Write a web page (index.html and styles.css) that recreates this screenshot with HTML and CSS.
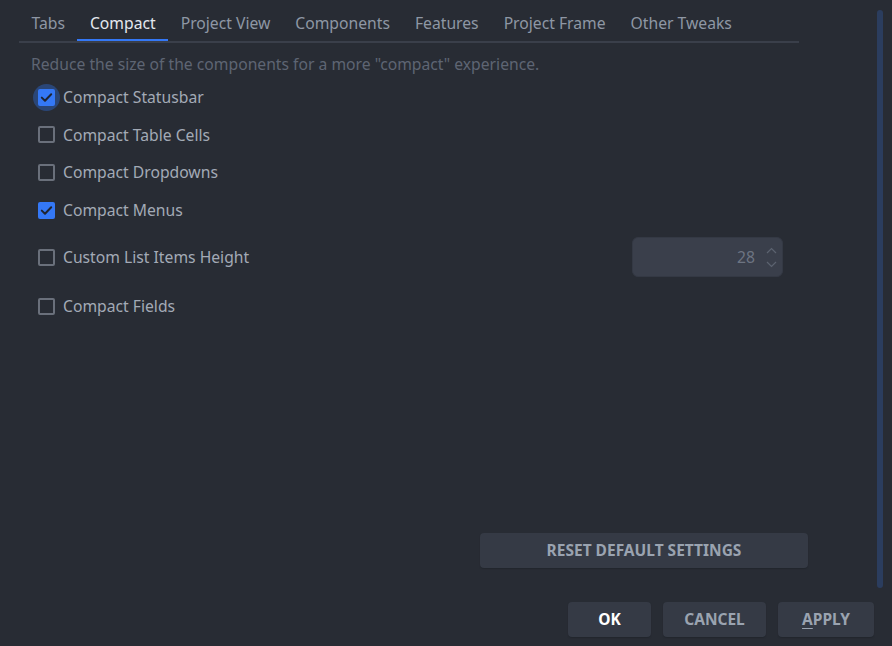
FILE: index.html
```
<!DOCTYPE html>
<html>
<head>
<meta charset="utf-8">
<link rel="stylesheet" href="styles.css">
</head>
<body>
<div class="window">
  <div class="top">
    <div class="panel">
      <div class="tabs">
        <div class="tab">Tabs</div>
        <div class="tab active">Compact</div>
        <div class="tab">Project View</div>
        <div class="tab">Components</div>
        <div class="tab">Features</div>
        <div class="tab">Project Frame</div>
        <div class="tab">Other Tweaks</div>
      </div>
      <div class="content">
        <div class="desc">Reduce the size of the components for a more "compact" experience.</div>
        <div class="row r1">
          <span class="cb checked focus"><svg viewBox="0 0 17 17" width="17" height="17"><path d="M3.8 8.6 L7 11.7 L13.2 5.3" fill="none" stroke="#1f2430" stroke-width="2" stroke-linecap="round" stroke-linejoin="round"/></svg></span>
          <span class="label">Compact Statusbar</span>
        </div>
        <div class="row r2">
          <span class="cb"></span>
          <span class="label">Compact Table Cells</span>
        </div>
        <div class="row r3">
          <span class="cb"></span>
          <span class="label">Compact Dropdowns</span>
        </div>
        <div class="row r4">
          <span class="cb checked"><svg viewBox="0 0 17 17" width="17" height="17"><path d="M3.8 8.6 L7 11.7 L13.2 5.3" fill="none" stroke="#1f2430" stroke-width="2" stroke-linecap="round" stroke-linejoin="round"/></svg></span>
          <span class="label">Compact Menus</span>
        </div>
        <div class="row r5">
          <span class="cb"></span>
          <span class="label grow">Custom List Items Height</span>
          <div class="spinner">
            <span class="num">28</span>
            <span class="arrows">
              <svg viewBox="0 0 11 7" width="11" height="7"><path d="M1 6 L5.5 1.5 L10 6" fill="none" stroke="#5c6370" stroke-width="1.2"/></svg>
              <svg viewBox="0 0 11 7" width="11" height="7"><path d="M1 1 L5.5 5.5 L10 1" fill="none" stroke="#5c6370" stroke-width="1.2"/></svg>
            </span>
          </div>
        </div>
        <div class="row r6">
          <span class="cb"></span>
          <span class="label">Compact Fields</span>
        </div>
      </div>
      <div class="reset-row">
        <button class="btn reset">RESET DEFAULT SETTINGS</button>
      </div>
    </div>
    <div class="track"><div class="thumb"></div></div>
  </div>
  <div class="actions">
    <button class="btn ok">OK</button>
    <button class="btn cancel">CANCEL</button>
    <button class="btn apply"><u>A</u>PPLY</button>
  </div>
</div>
</body>
</html>
```

FILE: styles.css
```
* { box-sizing: border-box; }
html, body {
  margin: 0;
  padding: 0;
  background: #282c34;
}
body {
  font-family: "Noto Sans", "Open Sans", sans-serif;
  font-size: 15.7px;
  color: #9aa2ae;
}
.window {
  width: 892px;
  height: 646px;
  display: flex;
  flex-direction: column;
  overflow: hidden;
}
.top {
  height: 588px;
  display: flex;
}
.panel {
  flex: 1;
  display: flex;
  flex-direction: column;
  padding-left: 19px;
  padding-bottom: 20px;
}
.tabs {
  width: 780px;
  display: flex;
  border-bottom: 2px solid #3a3f4a;
}
.tab {
  height: 41px;
  padding: 12px 12.5px 0;
  line-height: 22px;
  color: #8e97a4;
  white-space: nowrap;
}
.tab.active {
  color: #e4e8ee;
  box-shadow: inset 0 -2px 0 #3478f6;
}
.content {
  flex: 1;
  padding-left: 12px;
  display: flex;
  flex-direction: column;
}
.desc {
  margin-top: 11px;
  line-height: 20px;
  color: #5e6573;
  margin-bottom: 4px;
}
.row {
  display: flex;
  align-items: center;
  padding-left: 7px;
  width: 752px;
}
.r1 { height: 38px; }
.r2 { height: 37px; }
.r3 { height: 38px; }
.r4 { height: 38px; }
.r5 { height: 56px; }
.r6 { height: 42px; }
.cb {
  position: relative;
  width: 17px;
  height: 17px;
  border: 2px solid #6a707b;
  border-radius: 2px;
  margin-right: 8px;
  flex: none;
}
.cb.checked {
  background: #3478f6;
  border: none;
}
.cb.focus::before {
  content: "";
  position: absolute;
  left: -5px;
  top: -5px;
  width: 27px;
  height: 27px;
  border-radius: 50%;
  background: #2a4677;
}
.cb.focus::after {
  content: "";
  position: absolute;
  inset: 0;
  border-radius: 2px;
  background: #3478f6;
}
.cb svg {
  display: block;
  position: relative;
  z-index: 1;
}
.label {
  line-height: 20px;
  color: #a3aab6;
  white-space: nowrap;
}
.grow { flex: 1; }
.spinner {
  width: 151px;
  height: 40px;
  background: #3a3f4b;
  border: 1px solid #343944;
  border-radius: 6px;
  display: flex;
  align-items: center;
  justify-content: flex-end;
  padding-right: 5px;
}
.num {
  color: #6d7482;
  margin-right: 11px;
}
.arrows {
  display: flex;
  flex-direction: column;
  gap: 7px;
}
.arrows svg { display: block; }
.reset-row {
  display: flex;
  justify-content: flex-end;
  padding-right: 69px;
}
.btn {
  font-family: "Noto Sans", "Open Sans", sans-serif;
  font-size: 15.5px;
  font-weight: bold;
  height: 35px;
  border: none;
  border-radius: 4px;
  background: #353a45;
  color: #9aa3b0;
  padding: 0 0 2px;
  box-shadow: 0 1px 1px #22262d;
}
.btn u { text-decoration-thickness: 1px; text-underline-offset: 3px; }
.reset { width: 328px; }
.track {
  width: 10px;
  padding-top: 10px;
  margin-right: 5px;
}
.thumb {
  width: 6px;
  height: 578px;
  background: #2b3d5e;
  border-radius: 3px;
}
.actions {
  margin-top: 14px;
  display: flex;
  justify-content: flex-end;
  gap: 12px;
  padding-right: 18px;
}
.ok { width: 83px; color: #ffffff; }
.cancel { width: 103px; }
.apply { width: 96px; }
```
